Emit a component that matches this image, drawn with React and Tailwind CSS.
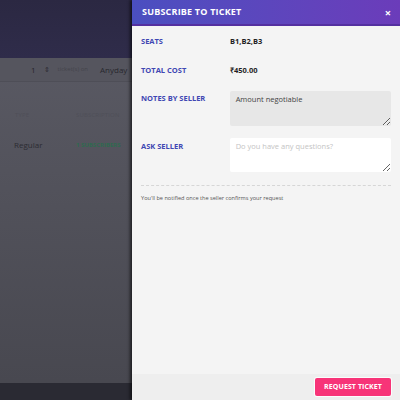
import React from 'react';

const font = { fontFamily: '"Open Sans", "Liberation Sans", sans-serif' };

export default function App() {
  return (
    <div className="relative w-[400px] h-[400px] overflow-hidden flex" style={font}>
      {/* page under the overlay */}
      <div className="w-[132px] h-full flex flex-col bg-gradient-to-b from-[#5c5c66] to-[#47474f]">
        <div className="h-[58px] bg-gradient-to-b from-[#2b2842] to-[#2f2c4a] shrink-0" />
        <div className="h-[24px] shrink-0 flex items-center gap-[8px] pl-[31px] border-b border-[#4e4e57] bg-[#55555e]">
          <span className="text-[8px] text-[#25252b]">1</span>
          <span className="text-[7px] text-[#2b2b31] leading-none">⇕</span>
          <span className="text-[6px] text-[#44444c]">ticket(s) on</span>
          <span className="text-[8px] text-[#28282e] ml-[4px]">Anyday</span>
        </div>
        <div className="flex pl-[15px] mt-[29px] text-[6px] text-[#4f4f58] tracking-wide">
          <span className="w-[61px]">TYPE</span>
          <span>SUBSCRIPTION</span>
        </div>
        <div className="flex items-center pl-[14px] mt-[19px]">
          <span className="w-[62px] text-[8px] text-[#2c2c33]">Regular</span>
          <span className="text-[6px] font-bold text-[#2f6a4f]">1 SUBSCRIBERS</span>
        </div>
        <div className="flex-1" />
        <div className="h-[17px] bg-[#2a2a33]" />
      </div>

      {/* side panel */}
      <div className="w-[268px] h-full flex flex-col bg-[#f4f4f4] shadow-[-2px_0_3px_rgba(0,0,0,0.6)]">
        <div className="h-[26px] shrink-0 flex items-center justify-between pl-[10px] pr-[9px] bg-gradient-to-r from-[#4a4fc0] to-[#6b3cba] border-b-2 border-[#5430a0]">
          <span className="text-[9px] font-bold text-white tracking-[0.2px]">SUBSCRIBE TO TICKET</span>
          <span className="text-[11px] font-bold text-white leading-none">×</span>
        </div>

        <div className="flex-1 flex flex-col px-[9px]">
          <div className="flex items-center mt-[10px] h-[11px]">
            <span className="w-[89px] text-[7.5px] font-bold text-[#3f47b3]">SEATS</span>
            <span className="text-[7.5px] font-bold text-[#1f1f24]">B1,B2,B3</span>
          </div>
          <div className="flex items-center mt-[18px] h-[11px]">
            <span className="w-[89px] text-[7.5px] font-bold text-[#3f47b3]">TOTAL COST</span>
            <span className="text-[7.5px] font-bold text-[#1f1f24]">₹450.00</span>
          </div>
          <div className="flex items-start mt-[15px]">
            <span className="w-[89px] mt-[2px] text-[7.5px] font-bold text-[#3f47b3]">NOTES BY SELLER</span>
            <textarea
              readOnly
              defaultValue="Amount negotiable"
              className="w-[162px] h-[35px] bg-[#e7e7e7] rounded-[2px] px-[6px] py-[3px] text-[7.5px] text-[#444] outline-none resize-y"
            />
          </div>
          <div className="flex items-start mt-[12px]">
            <span className="w-[89px] mt-[3px] text-[7.5px] font-bold text-[#3f47b3]">ASK SELLER</span>
            <textarea
              placeholder="Do you have any questions?"
              className="w-[162px] h-[34px] bg-white rounded-[2px] px-[6px] py-[3px] text-[7.5px] text-[#444] placeholder:text-[#c4c4c4] outline-none resize-y"
            />
          </div>
          <div className="mt-[13px] w-[250px] border-t border-dashed border-[#d6d6d6]" />
          <p className="mt-[8px] text-[5.6px] text-[#555]">You'll be notified once the seller confirms your request</p>
        </div>

        <div className="h-[26px] shrink-0 flex items-center justify-end pr-[9px] bg-[#eeeeee]">
          <button className="h-[18px] px-[9px] rounded-[2px] bg-[#f73478] text-white text-[7px] font-bold tracking-[0.1px] shadow-[0_0_0_1px_rgba(255,255,255,0.8)]">
            REQUEST TICKET
          </button>
        </div>
      </div>
    </div>
  );
}
